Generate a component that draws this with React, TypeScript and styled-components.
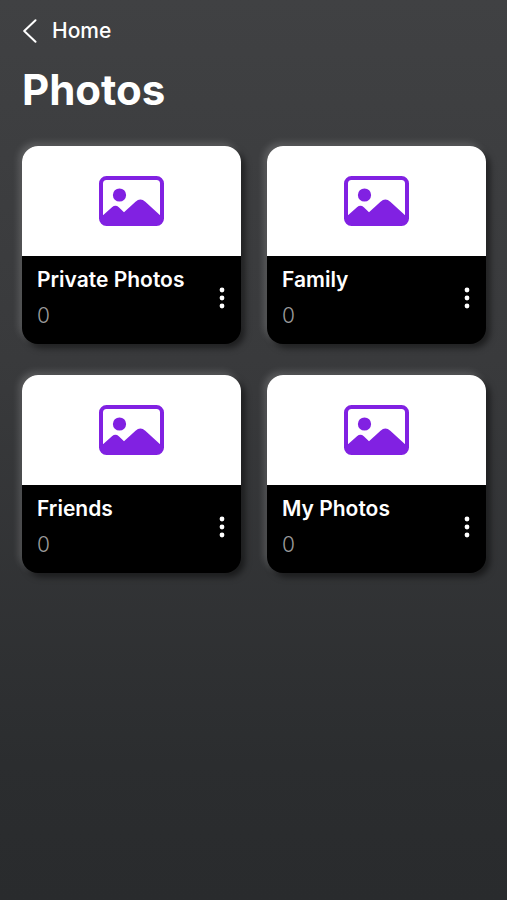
import React from "react";
import styled, { createGlobalStyle } from "styled-components";

const GlobalStyle = createGlobalStyle`
  *, *::before, *::after {
    box-sizing: border-box;
  }
  body {
    margin: 0;
    background: #2a2b2d;
    color: #ffffff;
    font-family: Inter, "Liberation Sans", sans-serif;
  }
`;

const Page = styled.main`
  min-height: 100vh;
  padding: 16px 21px 32px 22px;
  background: linear-gradient(180deg, #404143 0%, #393a3c 40%, #2b2d2f 85%, #292b2d 100%);
`;

const BackLink = styled.a`
  display: flex;
  align-items: center;
  gap: 15px;
  width: fit-content;
  color: inherit;
  font-size: 21px;
  font-weight: 500;
  line-height: 30px;
  text-decoration: none;
`;

const Title = styled.h1`
  margin: 18px 0 30px;
  font-size: 42px;
  font-weight: 700;
  line-height: 52px;
`;

const AlbumGrid = styled.ul`
  display: grid;
  grid-template-columns: repeat(2, minmax(0, 1fr));
  gap: 31px 26px;
  margin: 0;
  padding: 0;
  list-style: none;
`;

const AlbumCard = styled.li`
  overflow: hidden;
  border-radius: 16px;
  background: #000000;
  box-shadow: 4px 4px 6px rgba(0, 0, 0, 0.5), -3px -3px 7px rgba(255, 255, 255, 0.18);
`;

const Cover = styled.div`
  display: flex;
  align-items: center;
  justify-content: center;
  height: 110px;
  background: #ffffff;
`;

const Details = styled.div`
  display: flex;
  align-items: center;
  justify-content: space-between;
  height: 88px;
  padding: 0 6px 4px 15px;
`;

const AlbumName = styled.h2`
  margin: 0;
  font-size: 21px;
  font-weight: 600;
  line-height: 36px;
  white-space: nowrap;
`;

const Count = styled.p`
  margin: 0;
  color: #9a9a9a;
  font-size: 21px;
  font-weight: 300;
  line-height: 36px;
`;

const MenuButton = styled.button`
  display: flex;
  flex: none;
  padding: 10px;
  border: 0;
  background: none;
  color: inherit;
  cursor: pointer;
`;

const ChevronIcon = () => (
  <svg width="15" height="24" viewBox="0 0 15 24" fill="none" aria-hidden="true">
    <path d="M13.5 1.2 2.2 12l11.3 10.8" stroke="currentColor" strokeWidth="2" strokeLinecap="round" strokeLinejoin="round" />
  </svg>
);

const PhotoIcon = () => (
  <svg width="65" height="50" viewBox="0 0 65 50" aria-hidden="true">
    <rect x="2" y="2" width="61" height="46" rx="5.5" fill="none" stroke="#8121e2" strokeWidth="4" />
    <circle cx="20.5" cy="19" r="6.6" fill="#8121e2" />
    <path
      d="M2 41 13 31.3Q16.4 28.4 19.8 31.3L25 36.3 36.5 25.8Q41.4 21.4 46.3 25.8L63 41V43Q63 48 58 48H7Q2 48 2 43Z"
      fill="#8121e2"
    />
  </svg>
);

const MoreIcon = () => (
  <svg width="6" height="22" viewBox="0 0 6 22" fill="currentColor" aria-hidden="true">
    <circle cx="3" cy="3" r="2.4" />
    <circle cx="3" cy="11" r="2.4" />
    <circle cx="3" cy="19" r="2.4" />
  </svg>
);

const albums = [
  { name: "Private Photos", count: 0 },
  { name: "Family", count: 0 },
  { name: "Friends", count: 0 },
  { name: "My Photos", count: 0 },
];

export default function App() {
  return (
    <>
      <GlobalStyle />
      <Page>
        <nav>
          <BackLink href="#home">
            <ChevronIcon />
            Home
          </BackLink>
        </nav>
        <Title>Photos</Title>
        <AlbumGrid>
          {albums.map((album) => (
            <AlbumCard key={album.name}>
              <Cover>
                <PhotoIcon />
              </Cover>
              <Details>
                <div>
                  <AlbumName>{album.name}</AlbumName>
                  <Count>{album.count}</Count>
                </div>
                <MenuButton type="button" aria-label={`Options for ${album.name}`}>
                  <MoreIcon />
                </MenuButton>
              </Details>
            </AlbumCard>
          ))}
        </AlbumGrid>
      </Page>
    </>
  );
}
